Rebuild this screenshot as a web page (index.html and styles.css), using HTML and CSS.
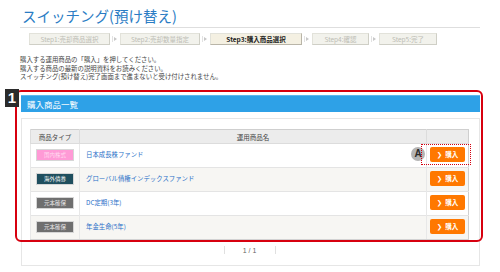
FILE: index.html
```html
<!DOCTYPE html>
<html lang="ja">
<head>
    <meta charset="UTF-8">
    <title>スイッチング(預け替え)</title>
    <link rel="stylesheet" href="styles.css">
</head>
<body>
    <div class="page">
        <h1 class="title">スイッチング(預け替え)</h1>

        <div class="steps">
            <div class="step step-1">Step1:売却商品選択</div>
            <div class="step-arrow"></div>
            <div class="step step-2">Step2:売却数量指定</div>
            <div class="step-arrow"></div>
            <div class="step step-3 current">Step3:購入商品選択</div>
            <div class="step-arrow"></div>
            <div class="step step-4">Step4:確認</div>
            <div class="step-arrow"></div>
            <div class="step step-5">Step5:完了</div>
        </div>

        <div class="notes">
            <p>購入する運用商品の「購入」を押してください。</p>
            <p>購入する商品の最新の説明資料をお読みください。</p>
            <p>スイッチング(預け替え)完了画面まで進まないと受け付けされません。</p>
        </div>

        <div class="section">
            <div class="section-head">購入商品一覧</div>
            <div class="panel">
                <table class="fund-table">
                    <thead>
                        <tr>
                            <th class="col-type">商品タイプ</th>
                            <th class="col-name">運用商品名</th>
                            <th class="col-buy"></th>
                        </tr>
                    </thead>
                    <tbody>
                        <tr>
                            <td class="col-type"><span class="tag tag-domestic">国内株式</span></td>
                            <td class="col-name"><a href="#">日本成長株ファンド</a></td>
                            <td class="col-buy">
                                <span class="buy-wrap">
                                    <span class="marker">A</span>
                                    <span class="dotted"></span>
                                    <a class="buy" href="#"><b>&#10095;</b>購入</a>
                                </span>
                            </td>
                        </tr>
                        <tr class="alt">
                            <td class="col-type"><span class="tag tag-foreign">海外債券</span></td>
                            <td class="col-name"><a href="#">グローバル債権インデックスファンド</a></td>
                            <td class="col-buy"><span class="buy-wrap"><a class="buy" href="#"><b>&#10095;</b>購入</a></span></td>
                        </tr>
                        <tr>
                            <td class="col-type"><span class="tag tag-safe">元本確保</span></td>
                            <td class="col-name"><a href="#">DC定期(3年)</a></td>
                            <td class="col-buy"><span class="buy-wrap"><a class="buy" href="#"><b>&#10095;</b>購入</a></span></td>
                        </tr>
                        <tr class="alt">
                            <td class="col-type"><span class="tag tag-safe">元本確保</span></td>
                            <td class="col-name"><a href="#">年金生命(5年)</a></td>
                            <td class="col-buy"><span class="buy-wrap"><a class="buy" href="#"><b>&#10095;</b>購入</a></span></td>
                        </tr>
                    </tbody>
                </table>

                <div class="pager">
                    <span class="pager-sep"></span>
                    <span class="pager-text">1 / 1</span>
                    <span class="pager-sep"></span>
                </div>
            </div>

            <div class="frame"></div>
            <div class="badge">1</div>
        </div>
    </div>
</body>
</html>
```

FILE: styles.css
```css
body {
    margin: 0;
    font-family: "Noto Sans CJK JP", "Noto Sans", sans-serif;
    color: #333;
    background-color: #fff;
}
.page {
    padding: 0 20px;
}
.title {
    margin: 0;
    height: 28px;
    box-sizing: border-box;
    padding: 8px 0 0 2px;
    font-size: 14.5px;
    line-height: 15px;
    font-weight: normal;
    color: #2a7cc4;
    border-bottom: 1px solid #dedede;
}
.steps {
    display: flex;
    margin: 5px 0 0 9px;
    height: 12px;
}
.step {
    box-sizing: border-box;
    height: 12px;
    font-size: 6.5px;
    line-height: 11px;
    text-align: center;
    color: #bdbdb5;
    background-color: #f2f2ec;
    border: 1px solid #e2e2da;
    border-right-color: #cfcfc6;
    border-bottom-color: #cfcfc6;
}
.step-1 { width: 81px; }
.step-2 { width: 80px; }
.step-3 { width: 92px; }
.step-4 { width: 57px; }
.step-5 { width: 58px; }
.step.current {
    color: #1a1a1a;
    font-weight: bold;
    background-color: #f4f0e2;
    border-right-color: #b9b5a8;
    border-bottom-color: #b9b5a8;
}
.step-arrow {
    width: 10px;
    position: relative;
}
.step-arrow::before {
    content: "";
    position: absolute;
    left: 2px;
    top: 3px;
    width: 1px;
    height: 6px;
    background-color: #e2e2e2;
}
.step-arrow::after {
    content: "";
    position: absolute;
    left: 4px;
    top: 4px;
    border-left: 3px solid #c8c8c8;
    border-top: 2px solid transparent;
    border-bottom: 2px solid transparent;
}
.notes {
    margin-top: 11px;
}
.notes p {
    margin: 0;
    font-size: 6.4px;
    line-height: 8.5px;
    color: #444;
}
.section {
    position: relative;
    margin: 13.5px 0 0 1px;
}
.section-head {
    height: 17px;
    box-sizing: border-box;
    padding-left: 6px;
    font-size: 8.5px;
    line-height: 17px;
    color: #fff;
    background-color: #2ea1e7;
    border-top: 1px solid #5cb8ee;
}
.panel {
    margin-top: 6px;
    border: 1px solid #e6e6e6;
    padding: 10px 10px 0 8px;
}
.fund-table {
    width: 100%;
    border-collapse: collapse;
    border: 1px solid #cfcfcf;
    border-bottom: 2px solid #d2d2d2;
}
.fund-table th {
    height: 13px;
    padding: 0;
    font-size: 6.5px;
    line-height: 8px;
    font-weight: normal;
    color: #444;
    background-color: #ececec;
    border-bottom: 1px solid #dcdcdc;
    border-left: 1px solid #dcdcdc;
}
.fund-table td {
    height: 21px;
    padding: 0 0 2px;
    font-size: 6.4px;
    line-height: 9px;
    border-top: 1px solid #e4e4e4;
    border-left: 1px solid #e8e8e8;
    vertical-align: middle;
}
.fund-table tr.alt td {
    background-color: #f7f6f3;
}
.col-type {
    width: 48px;
    text-align: center;
}
.col-buy {
    width: 41px;
    text-align: center;
}
td.col-name {
    padding-left: 6px;
}
.col-name a {
    color: #2a70c8;
    text-decoration: none;
}
.tag {
    display: block;
    width: 36px;
    height: 10px;
    margin: 0 auto;
    font-size: 5.5px;
    line-height: 10px;
    color: #fff;
    box-shadow: 0 0 0 1px #d6d6d6;
}
.tag-domestic {
    background-color: #ff9ad6;
    color: #ffd9ef;
}
.tag-foreign {
    background-color: #1f4f5e;
}
.tag-safe {
    background-color: #6f6f6f;
    color: #e8e8e8;
}
.buy-wrap {
    position: relative;
    display: block;
    width: 35px;
    height: 15px;
    margin: 0 auto;
}
.buy {
    display: block;
    height: 15px;
    font-size: 6.5px;
    line-height: 15px;
    font-weight: bold;
    color: #fff;
    text-decoration: none;
    background-color: #ff7800;
    border-radius: 2px;
}
.buy b {
    margin-right: 3px;
    font-family: "DejaVu Sans", sans-serif;
}
.dotted {
    position: absolute;
    left: -9px;
    top: -3px;
    width: 50px;
    height: 21px;
    box-sizing: border-box;
    border: 1px dotted #d4000f;
}
.marker {
    position: absolute;
    left: -19px;
    top: 0;
    width: 14px;
    height: 14px;
    border-radius: 50%;
    background-color: #b4b4b4;
    color: #2b2b2b;
    font-family: "Liberation Sans", sans-serif;
    font-weight: bold;
    font-size: 10px;
    line-height: 14px;
    text-align: center;
}
.pager {
    display: flex;
    justify-content: center;
    align-items: center;
    height: 24px;
    padding-bottom: 6px;
    box-sizing: border-box;
}
.pager-sep {
    width: 1px;
    height: 8px;
    background-color: #e0e0e0;
}
.pager-text {
    width: 50px;
    text-align: center;
    font-size: 7px;
    color: #666;
    font-family: "Liberation Sans", sans-serif;
}
.frame {
    position: absolute;
    left: -6px;
    top: -5px;
    width: 468px;
    height: 152px;
    box-sizing: border-box;
    border: 2px solid #d7000f;
    border-radius: 6px;
    pointer-events: none;
}
.badge {
    position: absolute;
    left: -16px;
    top: -6px;
    width: 14px;
    height: 18px;
    background-color: #2b2b2b;
    color: #fff;
    font-family: "Liberation Sans", sans-serif;
    font-weight: bold;
    font-size: 15px;
    line-height: 18px;
    text-align: center;
}
```
